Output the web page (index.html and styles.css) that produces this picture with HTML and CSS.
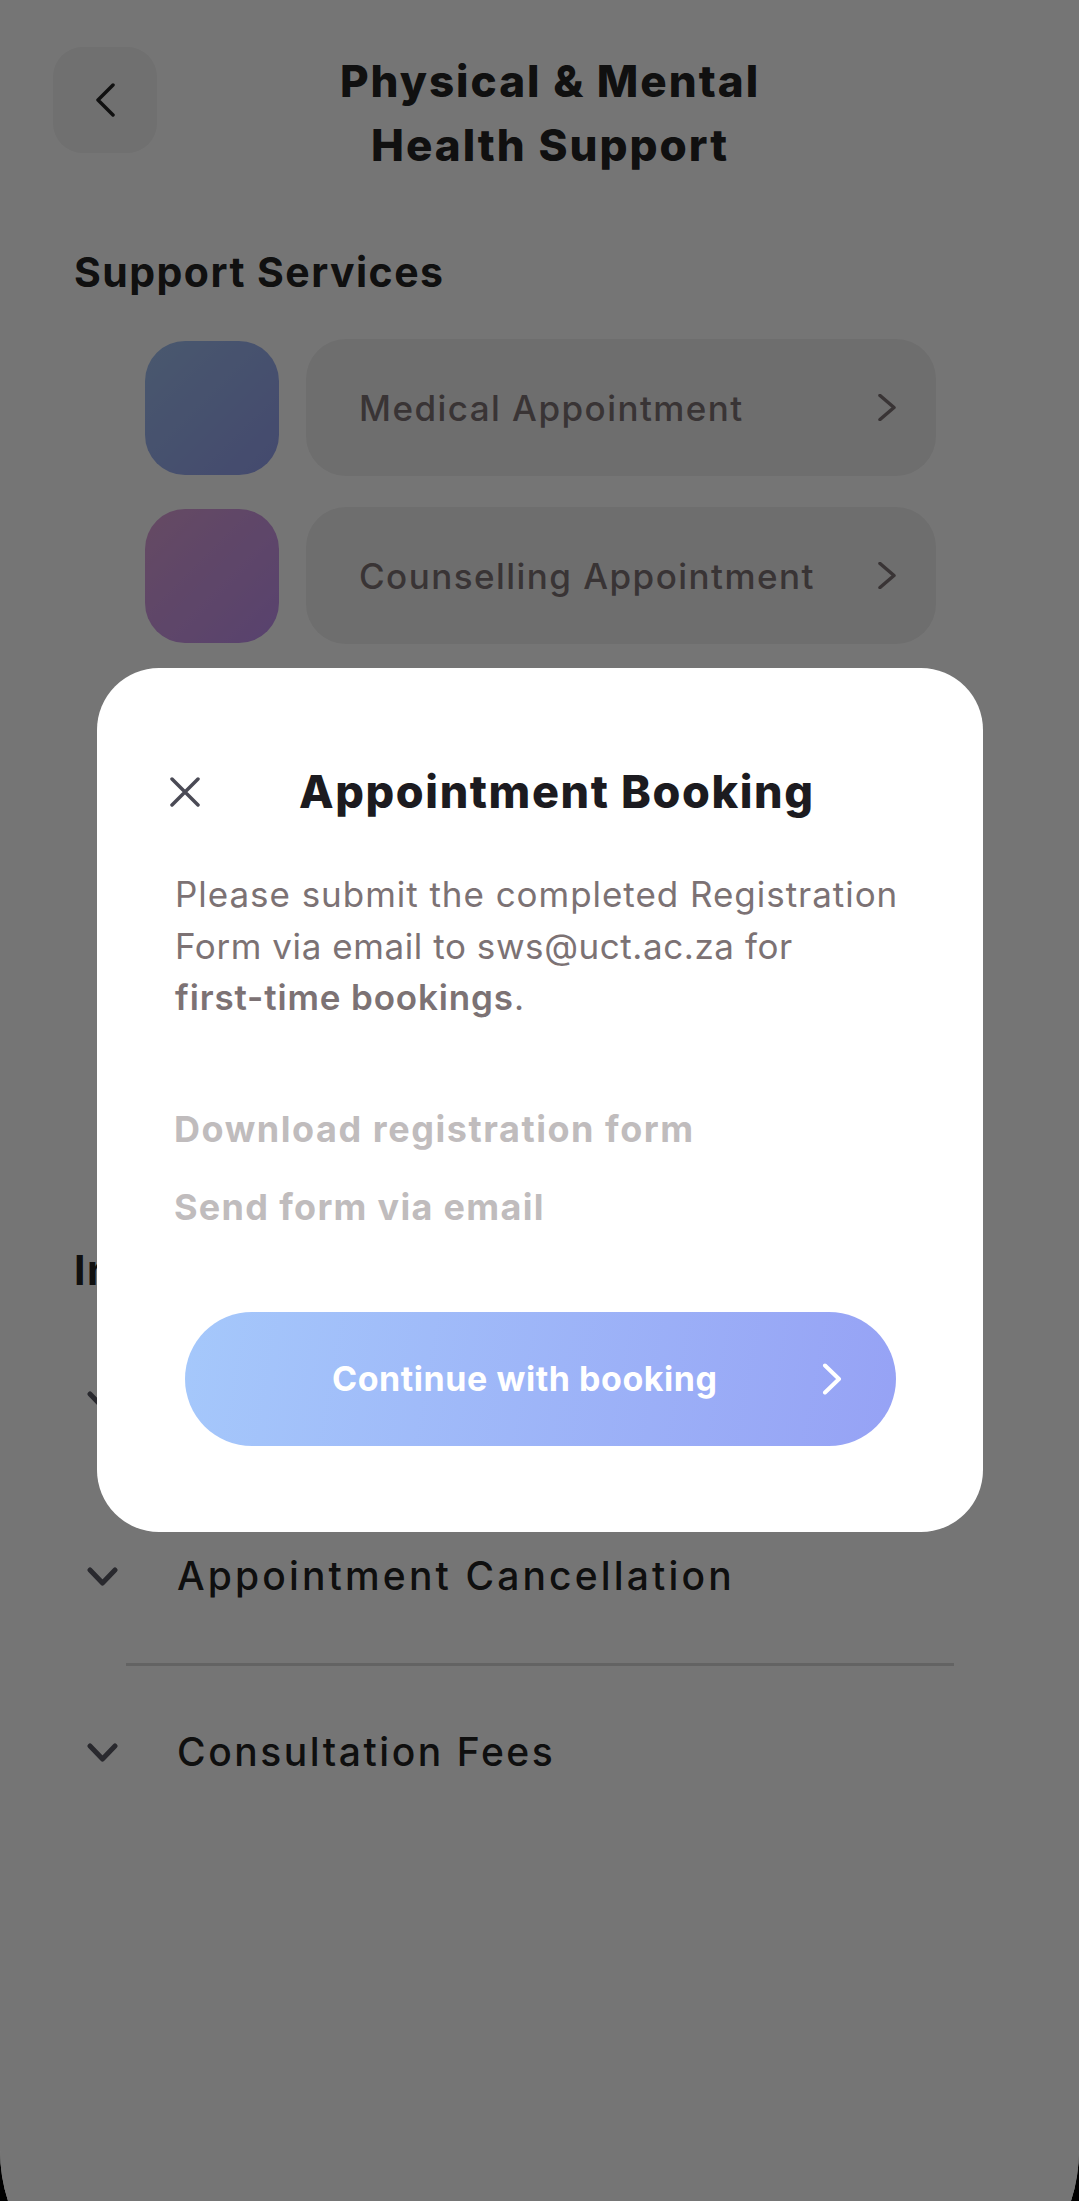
FILE: index.html
```html
<!DOCTYPE html>
<html lang="en">
<head>
<meta charset="utf-8">
<title>Physical &amp; Mental Health Support</title>
<link rel="stylesheet" href="styles.css">
</head>
<body>
<div class="screen">
  <header class="header">
    <button class="back" aria-label="Back">
      <svg class="back-icon" viewBox="0 0 20 34"><path d="M18 2 3 17l15 15"/></svg>
    </button>
    <h1 class="title">Physical &amp; Mental<br>Health Support</h1>
  </header>
  <h2 class="section-title">Support Services</h2>
  <div class="services">
    <div class="service">
      <div class="tile tile-blue"></div>
      <div class="service-card">
        <span class="service-label">Medical Appointment</span>
        <svg class="service-chevron" viewBox="0 0 18 27"><path d="M2 1.500 16 13.500 2 25.500"/></svg>
      </div>
    </div>
    <div class="service">
      <div class="tile tile-purple"></div>
      <div class="service-card">
        <span class="service-label">Counselling Appointment</span>
        <svg class="service-chevron" viewBox="0 0 18 27"><path d="M2 1.500 16 13.500 2 25.500"/></svg>
      </div>
    </div>
  </div>
  <h2 class="section-title info-title">Information</h2>
  <div class="accordion">
    <div class="acc-row">
      <svg class="acc-chevron" viewBox="0 0 31 19"><path d="M3 3l12.500 13L28 3"/></svg>
    </div>
    <div class="acc-divider"></div>
    <div class="acc-row">
      <svg class="acc-chevron" viewBox="0 0 31 19"><path d="M3 3l12.500 13L28 3"/></svg>
      <span class="acc-label">Appointment Cancellation</span>
    </div>
    <div class="acc-divider"></div>
    <div class="acc-row">
      <svg class="acc-chevron" viewBox="0 0 31 19"><path d="M3 3l12.500 13L28 3"/></svg>
      <span class="acc-label acc-label-tight">Consultation Fees</span>
    </div>
  </div>
  <div class="overlay"></div>
  <section class="modal">
    <div class="modal-head">
      <svg class="close" viewBox="0 0 30 30"><path d="M2 2l26 26M28 2 2 28"/></svg>
      <h3 class="modal-title">Appointment Booking</h3>
    </div>
    <p class="modal-text">Please submit the completed Registration<br><span class="line-tight">Form via email to sws@uct.ac.za for</span><br><strong class="modal-strong">first-time bookings</strong>.</p>
    <div class="modal-link link-first">Download registration form</div>
    <div class="modal-link link-second">Send form via email</div>
    <button class="cta">
      <span class="cta-label">Continue with booking</span>
      <svg class="cta-chevron" viewBox="0 0 20 32"><path d="M3 2.500 17 16 3 29.500"/></svg>
    </button>
  </section>
</div>
</body>
</html>
```
FILE: styles.css
```css
* { box-sizing: border-box; }
html, body { margin: 0; height: 2201px; overflow: hidden; background: #000; }
body { font-family: Inter, "Liberation Sans", sans-serif; }
h1, h2, h3, p { margin: 0; }
button { border: 0; padding: 0; font: inherit; }

.screen {
  position: relative;
  height: 2201px;
  overflow: hidden;
  background: #fff;
  clip-path: path("M0 0H1079V2150A166 166 0 0 1 1071 2201H8A166 166 0 0 1 0 2150Z");
}

.header { display: flex; align-items: flex-start; padding: 47px 136px 0 53px; }
.back {
  width: 104px; height: 106px; flex: none;
  display: flex; align-items: center; padding-left: 42px;
  background: #f3f3f3; border-radius: 30px;
}
.back-icon { width: 20px; height: 34px; fill: none; stroke: #242424; stroke-width: 3.500; stroke-linecap: round; stroke-linejoin: round; }
.title {
  flex: 1; margin-top: 3px; text-align: center;
  font-size: 44px; line-height: 63.500px; font-weight: 800; letter-spacing: 2px; color: #242424;
}

.section-title { margin: 70px 0 0 74px; font-size: 41px; line-height: 50px; font-weight: 700; letter-spacing: 1.450px; color: #242424; }

.services { margin: 42px 0 0 145px; display: flex; flex-direction: column; gap: 31px; }
.service { display: flex; align-items: center; gap: 27px; }
.tile { width: 134px; height: 134px; border-radius: 40px; }
.tile-blue { background: linear-gradient(135deg, #a0c0f0, #94a0f0); }
.tile-purple { background: linear-gradient(135deg, #dca2d8, #c090f0); }
.service-card {
  width: 630px; height: 137px;
  display: flex; align-items: center; justify-content: space-between;
  padding: 0 40px 0 53px;
  background: #efefef; border-radius: 40px;
}
.service-label { font-size: 35px; font-weight: 500; letter-spacing: 1.450px; color: #7c7274; }
.service-chevron { width: 18px; height: 27px; fill: none; stroke: #7c7274; stroke-width: 3.500; stroke-linecap: round; stroke-linejoin: round; }

.info-title { margin-top: 601px; }

.accordion { margin: 0 125px 0 87px; padding-top: 75px; }
.acc-row { display: flex; align-items: center; gap: 59px; height: 60px; }
.acc-chevron { width: 31px; height: 19px; flex: none; fill: none; stroke: #5a5a64; stroke-width: 5; stroke-linecap: round; stroke-linejoin: round; }
.acc-label { font-size: 39px; line-height: 60px; font-weight: 500; letter-spacing: 3.150px; color: #222; }
.acc-label-tight { letter-spacing: 2.550px; }
.acc-divider { height: 3px; margin: 57px 0 56px 39px; background: #d8d8d8; }

.overlay { position: absolute; inset: 0; background: rgba(0, 0, 0, .54); }

.modal {
  position: absolute; left: 97px; top: 668px;
  width: 886px; height: 864px;
  padding: 94px 0 0 78px;
  background: #fff; border-radius: 62px;
}
.modal-head { display: flex; align-items: center; height: 60px; margin-left: -5px; }
.close { width: 30px; height: 30px; flex: none; fill: none; stroke: #4a4a55; stroke-width: 3.500; stroke-linecap: round; }
.modal-title { margin-left: 99px; font-size: 45px; line-height: 60px; font-weight: 800; letter-spacing: 1.600px; color: #1c1b20; }
.modal-text { margin-top: 47px; font-size: 35px; line-height: 51.500px; font-weight: 400; letter-spacing: .96px; color: #7c7274; }
.line-tight { letter-spacing: .57px; }
.modal-strong { font-weight: 600; letter-spacing: .85px; }
.modal-link { font-size: 36px; line-height: 50px; font-weight: 700; letter-spacing: 1.300px; color: #c0bcbd; margin-left: -1px; }
.link-first { margin-top: 80px; letter-spacing: 1.550px; }
.link-second { margin-top: 28px; }
.cta {
  width: 711px; height: 134px; margin: 80px 0 0 10px;
  display: flex; align-items: center; justify-content: space-between;
  padding: 0 54px 0 147px;
  border-radius: 67px;
  background: linear-gradient(100deg, #a5c8fb, #96a2f5);
}
.cta-label { font-size: 34px; font-weight: 700; letter-spacing: .55px; color: #fff; }
.cta-chevron { width: 20px; height: 32px; fill: none; stroke: #fff; stroke-width: 4; stroke-linecap: round; stroke-linejoin: round; }
```
